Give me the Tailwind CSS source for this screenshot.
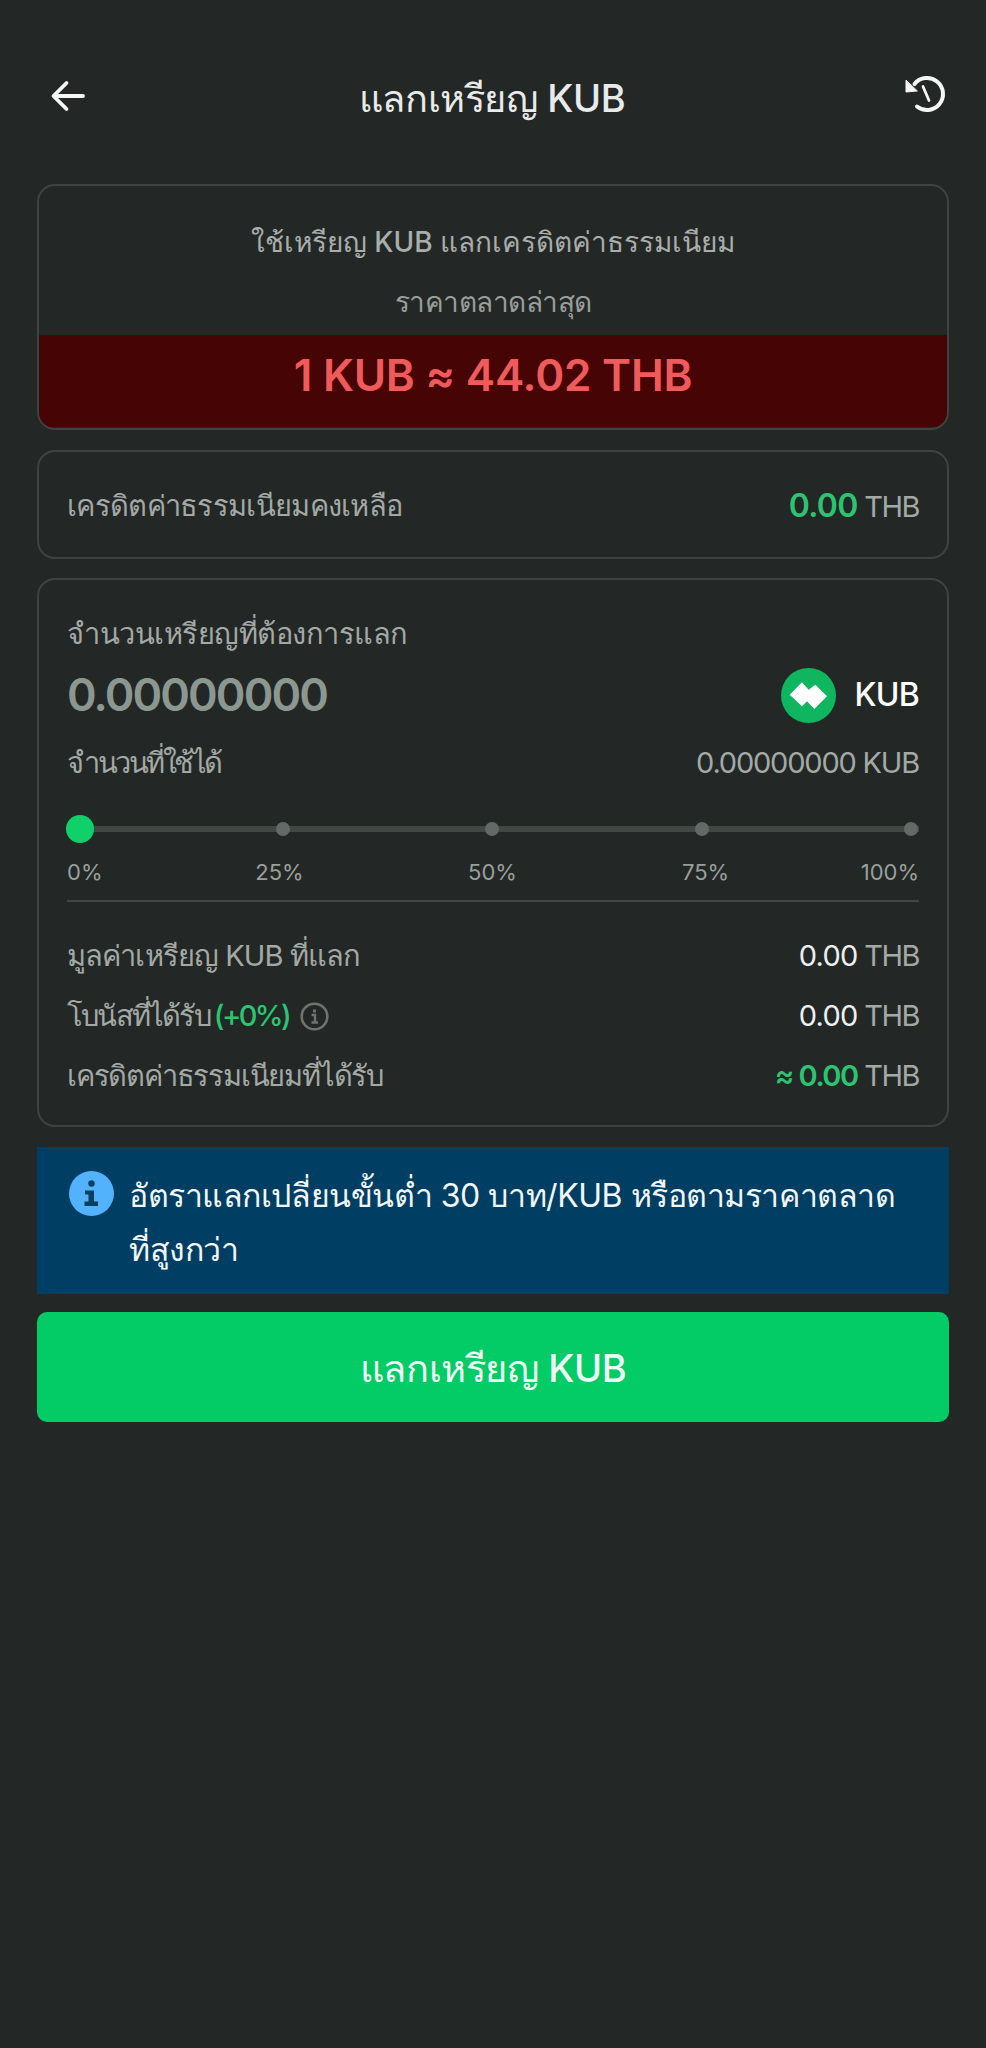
<!DOCTYPE html>
<html lang="th">
<head>
  <meta charset="UTF-8">
  <meta name="viewport" content="width=device-width, initial-scale=1.0">
  <title>แลกเหรียญ KUB</title>
  <script src="https://cdn.jsdelivr.net/npm/@tailwindcss/browser@4"></script>
</head>
<body class="bg-[#232826] font-['Inter','Noto_Sans','Noto_Sans_CJK_SC',sans-serif] text-[#a4a9a6]">
  <div class="w-[986px] h-[2048px] px-[37px]">
    <!-- Header -->
    <div class="h-[184px] -mx-[37px] px-[50px] pt-[8px] flex items-center justify-between">
      <svg class="w-[36px] h-[36px]" viewBox="0 0 36 36" fill="none" stroke="#f5f6f5" stroke-width="3.800" stroke-linecap="round" stroke-linejoin="round"><path d="M33 18H4M16.500 5 3.500 18l13 13"/></svg>
      <h1 class="mt-[4px] text-[38px] tracking-[-0.4px] font-medium text-[#e9eaea]">แลกเหรียญ KUB</h1>
      <svg class="ml-[7px] w-[44px] h-[44px] -mr-[13px] -mt-[4px]" viewBox="0 0 44 44" fill="none" stroke="#f5f6f5" stroke-width="4" stroke-linecap="round" stroke-linejoin="round"><path d="M12 34.500A16 16 0 1 0 9.500 12"/><path d="M18 14.500 24 28.500" stroke-width="2.800"/><path d="M1 8.500V20L12 19z" fill="#f5f6f5" stroke-width="1"/></svg>
    </div>

    <!-- Rate card -->
    <div class="h-[246px] border-2 border-[#3c4340] rounded-[18px] overflow-hidden text-center flex flex-col">
      <p class="mt-[36px] leading-[40px] text-[28px] font-medium text-[#a9adab]">ใช้เหรียญ KUB แลกเครดิตค่าธรรมเนียม</p>
      <p class="mt-[20px] leading-[40px] text-[28px] tracking-[-0.5px] text-[#999e9b]">ราคาตลาดล่าสุด</p>
      <div class="mt-[13px] h-[92px] pb-[12px] bg-[#470404] flex items-center justify-center text-[44px] font-semibold tracking-[-0.2px] text-[#ef5b5b]">1 KUB ≈ 44.02 THB</div>
    </div>

    <!-- Balance -->
    <div class="mt-[20px] h-[109px] border-2 border-[#3c4340] rounded-[18px] px-[28px] pt-[2px] flex items-center justify-between text-[29px]">
      <span class="tracking-[-0.7px]">เครดิตค่าธรรมเนียมคงเหลือ</span>
      <span class="tracking-[-1.5px]"><span class="text-[32px] font-semibold tracking-[-0.7px] text-[#2cc470]">0.00</span> THB</span>
    </div>

    <!-- Exchange form -->
    <div class="mt-[19px] h-[549px] border-2 border-[#3c4340] rounded-[18px] px-[28px] pt-[32px] text-[29px]">
      <p class="leading-[44px] tracking-[-0.5px]">จำนวนเหรียญที่ต้องการแลก</p>
      <div class="mt-[5px] h-[68px] flex items-center justify-between">
        <span class="text-[45px] font-semibold tracking-[-1.9px] text-[#8b9790]">0.00000000</span>
        <span class="flex items-center gap-[18px] text-[32px] font-medium tracking-[-0.7px] text-white">
          <svg class="w-[55px] h-[55px]" viewBox="0 0 55 55"><circle cx="27.500" cy="27.500" r="27.500" fill="#10b55f"/><path d="M8.700 26.700 21 14.300 27.700 21.700 34.300 16.700 46 28.300 33.300 41 26 33.300 21 38.300z" fill="#fff"/></svg>
          KUB
        </span>
      </div>
      <div class="mt-[12px] flex items-center justify-between leading-[44px]">
        <span class="tracking-[-2.500px]">จำนวนที่ใช้ได้</span>
        <span class="tracking-[-1.2px]">0.00000000 KUB</span>
      </div>

      <!-- Slider -->
      <div class="relative mt-[30px] h-[28px] flex items-center">
        <div class="absolute left-0 right-0 top-[11px] h-[6px] bg-[#414844]"></div>
        <span class="relative -ml-[1px] w-[28px] h-[28px] rounded-full bg-[#0fd069]"></span>
        <span class="relative ml-[182px] w-[14px] h-[14px] rounded-full bg-[#636966]"></span>
        <span class="relative ml-[195px] w-[14px] h-[14px] rounded-full bg-[#636966]"></span>
        <span class="relative ml-[196px] w-[14px] h-[14px] rounded-full bg-[#636966]"></span>
        <span class="relative ml-[195px] w-[14px] h-[14px] rounded-full bg-[#636966]"></span>
      </div>
      <div class="mt-[13px] grid grid-cols-[106px_213px_213px_213px_107px] text-[22px] leading-[32px] text-center text-[#9a9f9c]">
        <span class="text-left">0%</span><span>25%</span><span>50%</span><span>75%</span><span class="text-right">100%</span>
      </div>
      <div class="mt-[12px] h-[2px] bg-[#414844]"></div>

      <!-- Summary -->
      <div class="mt-[32px] flex flex-col gap-[16px] leading-[44px]">
        <div class="flex items-center justify-between">
          <span class="tracking-[-0.9px]">มูลค่าเหรียญ KUB ที่แลก</span>
          <span class="tracking-[-1.5px]"><span class="tracking-[-0.7px] text-[#eef0ef]">0.00</span> THB</span>
        </div>
        <div class="flex items-center justify-between">
          <span class="flex items-center gap-[4px] tracking-[-1.8px]">โบนัสที่ได้รับ <span class="font-medium tracking-[-2.600px] text-[#2cc470]">(+0%)</span>
            <svg class="ml-[7px] w-[29px] h-[29px]" viewBox="0 0 29 29" fill="none" stroke="#6e736f" stroke-width="2.600"><circle cx="14.500" cy="14.500" r="12.800"/><path d="M14.500 7.500v3" stroke-width="3"/><path d="M11.500 13h3.500v7M11.500 20.500h6.500" stroke-width="2.400"/></svg>
          </span>
          <span class="tracking-[-1.5px]"><span class="tracking-[-0.7px] text-[#eef0ef]">0.00</span> THB</span>
        </div>
        <div class="flex items-center justify-between">
          <span class="tracking-[-1.2px]">เครดิตค่าธรรมเนียมที่ได้รับ</span>
          <span class="tracking-[-1.5px]"><span class="font-semibold text-[#2cc470]">≈ 0.00</span> THB</span>
        </div>
      </div>
    </div>

    <!-- Notice -->
    <div class="mt-[20px] h-[147px] bg-[#003f63] pl-[32px] pr-[20px] pt-[22px] flex items-start gap-[15px]">
      <svg class="mt-[2px] w-[45px] h-[45px] shrink-0" viewBox="0 0 45 45"><circle cx="22.500" cy="22.500" r="22.500" fill="#52b2fb"/><circle cx="22.500" cy="12.500" r="3.200" fill="#0b3f62"/><path d="M16 19.500h9v11h4v4.500H15.500v-4.500h4v-7H16z" fill="#0b3f62"/></svg>
      <p class="text-[32px] leading-[54px] tracking-[-0.45px] text-[#f3f6f7]">อัตราแลกเปลี่ยนขั้นต่ำ 30 บาท/KUB หรือตามราคาตลาด<br>ที่สูงกว่า</p>
    </div>

    <!-- Submit -->
    <button class="mt-[18px] w-full h-[110px] pt-[3px] rounded-[10px] bg-[#03cc66] text-[38px] tracking-[-0.4px] font-medium text-[#f1fbf5]">แลกเหรียญ KUB</button>
  </div>
</body>
</html>
